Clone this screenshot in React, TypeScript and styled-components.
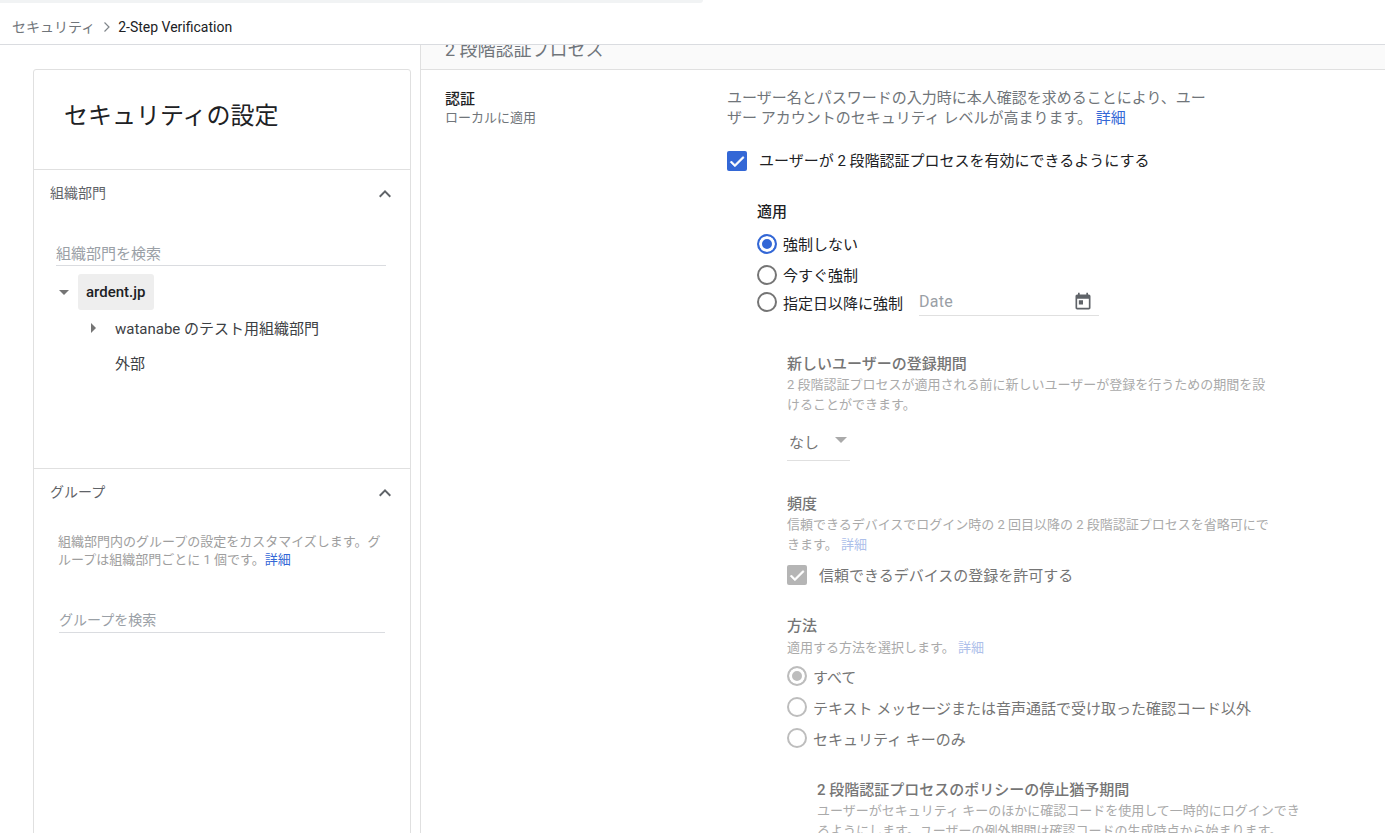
import styled, { createGlobalStyle } from 'styled-components';

const GlobalStyle = createGlobalStyle`
  html, body {
    margin: 0;
    height: 100%;
    overflow: hidden;
    background: #fff;
    font-family: Roboto, "Noto Sans CJK JP", sans-serif;
    color: #202124;
  }
  * { box-sizing: border-box; }
`;

const Chevron = () => (
  <ChevronSvg width="24" height="24" viewBox="0 0 24 24" fill="#5f6368">
    <path d="M12 8l-6 6 1.41 1.41L12 10.83l4.59 4.58L18 14z" />
  </ChevronSvg>
);

const CalendarIcon = () => (
  <svg width="20" height="20" viewBox="0 0 24 24" fill="#5f6368">
    <path d="M19 3h-1V1h-2v2H8V1H6v2H5c-1.1 0-2 .9-2 2v14c0 1.100.9 2 2 2h14c1.100 0 2-.9 2-2V5c0-1.100-.9-2-2-2zm0 16H5V8h14v11zM7 10h5v5H7z" />
  </svg>
);

const CheckIcon = () => (
  <svg width="20" height="20" viewBox="0 0 24 24" fill="#fff" stroke="#fff" strokeWidth="0.8">
    <path d="M9.5 16.2L5.3 12l-1.4 1.4 5.6 5.600 11-11L19.100 6.600z" />
  </svg>
);

const App = () => {
  return (
    <>
      <GlobalStyle />
      <Page>
        <TopStrip />
        <Breadcrumb>
          <Crumb>セキュリティ</Crumb>
          <CrumbArrow viewBox="0 0 8 12" width="8" height="12">
            <path d="M1.500 1.500L6 6l-4.500 4.500" fill="none" stroke="#80868b" strokeWidth="1.200" />
          </CrumbArrow>
          <CrumbCurrent>2-Step Verification</CrumbCurrent>
        </Breadcrumb>
        <Main>
          <Side>
            <Card>
              <CardTitle>セキュリティの設定</CardTitle>
              <OrgSection>
                <SectionHead>
                  <SectionLabel>組織部門</SectionLabel>
                  <Chevron />
                </SectionHead>
                <SearchBox>組織部門を検索</SearchBox>
                <TreeRow>
                  <TreeCaretDown />
                  <TreeSelected>ardent.jp</TreeSelected>
                </TreeRow>
                <TreeChild>
                  <TreeCaretRight />
                  <TreeChildLabel>watanabe のテスト用組織部門</TreeChildLabel>
                </TreeChild>
                <TreeChild>
                  <TreeChildLabel>外部</TreeChildLabel>
                </TreeChild>
              </OrgSection>
              <GroupSection>
                <SectionHead>
                  <SectionLabel>グループ</SectionLabel>
                  <Chevron />
                </SectionHead>
                <GroupNote>
                  組織部門内のグループの設定をカスタマイズします。グループは組織部門ごとに 1 個です。<NoteLink>詳細</NoteLink>
                </GroupNote>
                <GroupSearch>グループを検索</GroupSearch>
              </GroupSection>
            </Card>
          </Side>
          <Content>
            <Band>
              <BandTitle>2 段階認証プロセス</BandTitle>
            </Band>
            <Settings>
              <SettingName>
                <NameTitle>認証</NameTitle>
                <NameSub>ローカルに適用</NameSub>
              </SettingName>
              <SettingBody>
                <Intro>
                  ユーザー名とパスワードの入力時に本人確認を求めることにより、ユーザー アカウントのセキュリティ レベルが高まります。 <IntroLink>詳細</IntroLink>
                </Intro>
                <MainCheck>
                  <CheckBox>
                    <CheckIcon />
                  </CheckBox>
                  <MainCheckLabel>ユーザーが 2 段階認証プロセスを有効にできるようにする</MainCheckLabel>
                </MainCheck>
                <Enforce>
                  <EnforceTitle>適用</EnforceTitle>
                  <EnforceRow $h={31}>
                    <Radio $checked />
                    <RadioLabel>強制しない</RadioLabel>
                  </EnforceRow>
                  <EnforceRow $h={31}>
                    <Radio />
                    <RadioLabel>今すぐ強制</RadioLabel>
                  </EnforceRow>
                  <EnforceRow $h={24}>
                    <Radio />
                    <RadioLabel>指定日以降に強制</RadioLabel>
                    <DateField>
                      <DateText>Date</DateText>
                      <CalendarIcon />
                    </DateField>
                  </EnforceRow>
                  <Disabled>
                    <Block>
                      <BlockTitle>新しいユーザーの登録期間</BlockTitle>
                      <BlockText>2 段階認証プロセスが適用される前に新しいユーザーが登録を行うための期間を設けることができます。</BlockText>
                      <Select>
                        <span>なし</span>
                        <SelectCaret />
                      </Select>
                    </Block>
                    <FrequencyBlock>
                      <BlockTitle>頻度</BlockTitle>
                      <BlockText>
                        信頼できるデバイスでログイン時の 2 回目以降の 2 段階認証プロセスを省略可にできます。 <FadedLink>詳細</FadedLink>
                      </BlockText>
                      <TrustRow>
                        <GreyCheck>
                          <CheckIcon />
                        </GreyCheck>
                        <TrustLabel>信頼できるデバイスの登録を許可する</TrustLabel>
                      </TrustRow>
                    </FrequencyBlock>
                    <MethodBlock>
                      <BlockTitle>方法</BlockTitle>
                      <MethodText>
                        適用する方法を選択します。 <FadedLink>詳細</FadedLink>
                      </MethodText>
                      <MethodList>
                        <MethodRow>
                          <GreyRadio $checked />
                          <MethodLabel>すべて</MethodLabel>
                        </MethodRow>
                        <MethodRow>
                          <GreyRadio />
                          <MethodLabel>テキスト メッセージまたは音声通話で受け取った確認コード以外</MethodLabel>
                        </MethodRow>
                        <MethodRow>
                          <GreyRadio />
                          <MethodLabel>セキュリティ キーのみ</MethodLabel>
                        </MethodRow>
                      </MethodList>
                    </MethodBlock>
                    <GraceBlock>
                      <BlockTitle>2 段階認証プロセスのポリシーの停止猶予期間</BlockTitle>
                      <BlockText>ユーザーがセキュリティ キーのほかに確認コードを使用して一時的にログインできるようにします。ユーザーの例外期間は確認コードの生成時点から始まります。</BlockText>
                    </GraceBlock>
                  </Disabled>
                </Enforce>
              </SettingBody>
            </Settings>
          </Content>
        </Main>
      </Page>
    </>
  );
};

export default App;

const Page = styled.div`
  display: flex;
  flex-direction: column;
  height: 833px;
  overflow: hidden;
`;

const TopStrip = styled.div`
  width: 703px;
  height: 3px;
  flex: none;
  background: #f1f3f4;
  border-bottom-right-radius: 6px;
`;

const Breadcrumb = styled.div`
  display: flex;
  align-items: center;
  flex: none;
  height: 42px;
  padding: 7px 0 0 12px;
  border-bottom: 1px solid #dadce0;
  font-size: 14px;
  background: #fff;
`;

const Crumb = styled.span`
  padding-bottom: 2px;
  color: #70757a;
`;

const CrumbArrow = styled.svg`
  margin: 0 7px 0 8px;
`;

const CrumbCurrent = styled.span`
  color: #202124;
`;

const Main = styled.div`
  display: flex;
  flex: 1;
  min-height: 0;
`;

const Side = styled.div`
  flex: none;
  width: 421px;
  padding: 24px 9px 0 33px;
  border-right: 1px solid #e0e0e0;
`;

const Card = styled.div`
  height: 900px;
  border: 1px solid #e0e0e0;
  border-radius: 3px;
  background: #fff;
`;

const CardTitle = styled.h1`
  margin: 0;
  height: 100px;
  padding: 28px 0 0 30px;
  font-size: 24px;
  font-weight: 400;
  line-height: 36px;
  color: #202124;
  border-bottom: 1px solid #e0e0e0;
`;

const OrgSection = styled.section`
  height: 299px;
  border-bottom: 1px solid #e0e0e0;
`;

const GroupSection = styled.section``;

const SectionHead = styled.div`
  display: flex;
  align-items: center;
  justify-content: space-between;
  height: 46px;
  padding: 0 13px 0 16px;
`;

const SectionLabel = styled.span`
  padding-bottom: 2px;
  font-size: 14px;
  color: #5f6368;
`;

const ChevronSvg = styled.svg`
  margin-top: 2px;
`;

const SearchBox = styled.div`
  margin: 26px 24px 0 22px;
  height: 24px;
  padding-top: 1px;
  font-size: 15px;
  line-height: 22px;
  color: #9aa0a6;
  border-bottom: 1px solid #dadce0;
`;

const TreeRow = styled.div`
  display: flex;
  align-items: center;
  margin: 8px 0 0 25px;
`;

const TreeCaretDown = styled.span`
  width: 0;
  height: 0;
  margin-right: 9px;
  border-left: 5px solid transparent;
  border-right: 5px solid transparent;
  border-top: 5px solid #757575;
`;

const TreeSelected = styled.span`
  display: block;
  height: 36px;
  padding: 0 8px;
  min-width: 76px;
  font-size: 15px;
  font-weight: 500;
  line-height: 36px;
  background: #eeeeee;
  border-radius: 3px;
  color: #202124;
`;

const TreeChild = styled.div`
  display: flex;
  align-items: center;
  height: 35px;
  padding-left: 81px;
  position: relative;
`;

const TreeCaretRight = styled.span`
  position: absolute;
  left: 57px;
  top: 13px;
  width: 0;
  height: 0;
  border-top: 5px solid transparent;
  border-bottom: 5px solid transparent;
  border-left: 5px solid #757575;
`;

const TreeChildLabel = styled.span`
  padding-bottom: 1px;
  font-size: 15px;
  color: #3c4043;
`;

const GroupNote = styled.p`
  width: 332px;
  margin: 18px 0 0 24px;
  font-size: 13px;
  line-height: 18px;
  color: #9e9e9e;
`;

const NoteLink = styled.span`
  color: #3367d6;
`;

const GroupSearch = styled.div`
  margin: 40px 25px 0 25px;
  height: 24px;
  font-size: 14px;
  line-height: 22px;
  color: #9aa0a6;
  border-bottom: 1px solid #dadce0;
`;

const Content = styled.div`
  flex: 1;
  min-width: 0;
`;

const Band = styled.div`
  height: 25px;
  overflow: hidden;
  padding-left: 24px;
  background: #fafafa;
  border-bottom: 1px solid #e0e0e0;
`;

const BandTitle = styled.div`
  margin-top: -7px;
  font-size: 18px;
  line-height: 24px;
  color: #70757a;
`;

const Settings = styled.div`
  display: flex;
  padding: 18px 0 0 24px;
`;

const SettingName = styled.div`
  flex: none;
  width: 282px;
  padding-top: 1px;
`;

const NameTitle = styled.div`
  font-size: 15px;
  font-weight: 500;
  line-height: 20px;
  color: #202124;
`;

const NameSub = styled.div`
  font-size: 13px;
  line-height: 18px;
  color: #70757a;
`;

const SettingBody = styled.div`
  width: 582px;
`;

const Intro = styled.p`
  width: 488px;
  margin: 0;
  font-size: 15px;
  line-height: 20px;
  color: #70757a;
`;

const IntroLink = styled.span`
  color: #3367d6;
`;

const MainCheck = styled.div`
  display: flex;
  align-items: center;
  height: 22px;
  margin-top: 22px;
`;

const CheckBox = styled.span`
  display: flex;
  align-items: center;
  justify-content: center;
  width: 20px;
  height: 20px;
  background: #3367d6;
  border-radius: 2px;
`;

const MainCheckLabel = styled.span`
  margin-left: 12px;
  padding-bottom: 3px;
  font-size: 15px;
  color: #202124;
`;

const Enforce = styled.div`
  margin: 30px 0 0 30px;
`;

const EnforceTitle = styled.div`
  margin-bottom: 6px;
  font-size: 15px;
  font-weight: 500;
  line-height: 20px;
  color: #202124;
`;

const EnforceRow = styled.div<{ $h: number }>`
  display: flex;
  align-items: center;
  height: ${(p) => p.$h}px;
`;

const Radio = styled.span<{ $checked?: boolean }>`
  flex: none;
  width: 20px;
  height: 20px;
  border-radius: 50%;
  border: 2px solid ${(p) => (p.$checked ? '#3367d6' : '#757575')};
  background: ${(p) => (p.$checked ? '#3367d6' : '#fff')};
  box-shadow: ${(p) => (p.$checked ? 'inset 0 0 0 3px #fff' : 'none')};
`;

const RadioLabel = styled.span`
  margin-left: 6px;
  font-size: 15px;
  color: #202124;
`;

const DateField = styled.div`
  display: flex;
  align-items: center;
  justify-content: space-between;
  width: 180px;
  height: 28px;
  margin: 0 0 0 16px;
  padding-right: 6px;
  border-bottom: 1px solid #e0e0e0;
`;

const DateText = styled.span`
  font-size: 16px;
  letter-spacing: 0.3px;
  color: #9aa0a6;
`;

const Disabled = styled.div`
  margin-left: 30px;
  margin-top: 40px;
`;

const Block = styled.div``;

const BlockTitle = styled.div`
  font-size: 15px;
  font-weight: 500;
  line-height: 20px;
  color: #757575;
`;

const BlockText = styled.div`
  width: 488px;
  margin-top: 1px;
  font-size: 13px;
  line-height: 20px;
  color: #aaaaaa;
`;

const FadedLink = styled.span`
  color: #adc0ea;
`;

const Select = styled.div`
  display: flex;
  align-items: center;
  width: 63px;
  height: 36px;
  margin-top: 10px;
  padding: 0 0 2px 2px;
  font-size: 15px;
  color: #757575;
  border-bottom: 1px solid #e0e0e0;
`;

const SelectCaret = styled.span`
  width: 0;
  height: 0;
  margin: 0 0 4px 16px;
  border-left: 6px solid transparent;
  border-right: 6px solid transparent;
  border-top: 6px solid #aaaaaa;
`;

const FrequencyBlock = styled.div`
  margin-top: 33px;
`;

const TrustRow = styled.div`
  display: flex;
  align-items: center;
  margin-top: 9px;
`;

const GreyCheck = styled.span`
  display: flex;
  align-items: center;
  justify-content: center;
  width: 20px;
  height: 20px;
  background: #b5b5b5;
  border-radius: 2px;
`;

const TrustLabel = styled.span`
  margin-left: 12px;
  font-size: 15px;
  color: #757575;
`;

const MethodBlock = styled.div`
  margin-top: 31px;
`;

const MethodText = styled(BlockText)`
  margin-top: 2px;
`;

const MethodList = styled.div`
  display: flex;
  flex-direction: column;
  gap: 11px;
  margin-top: 8px;
`;

const MethodRow = styled.div`
  display: flex;
  align-items: center;
  height: 20px;
`;

const GreyRadio = styled.span<{ $checked?: boolean }>`
  flex: none;
  width: 20px;
  height: 20px;
  border-radius: 50%;
  border: 2px solid #bdbdbd;
  background: ${(p) => (p.$checked ? '#bdbdbd' : '#fff')};
  box-shadow: ${(p) => (p.$checked ? 'inset 0 0 0 3px #fff' : 'none')};
`;

const MethodLabel = styled.span`
  margin-left: 6px;
  font-size: 15px;
  color: #757575;
`;

const GraceBlock = styled.div`
  margin: 32px 0 0 30px;
`;
